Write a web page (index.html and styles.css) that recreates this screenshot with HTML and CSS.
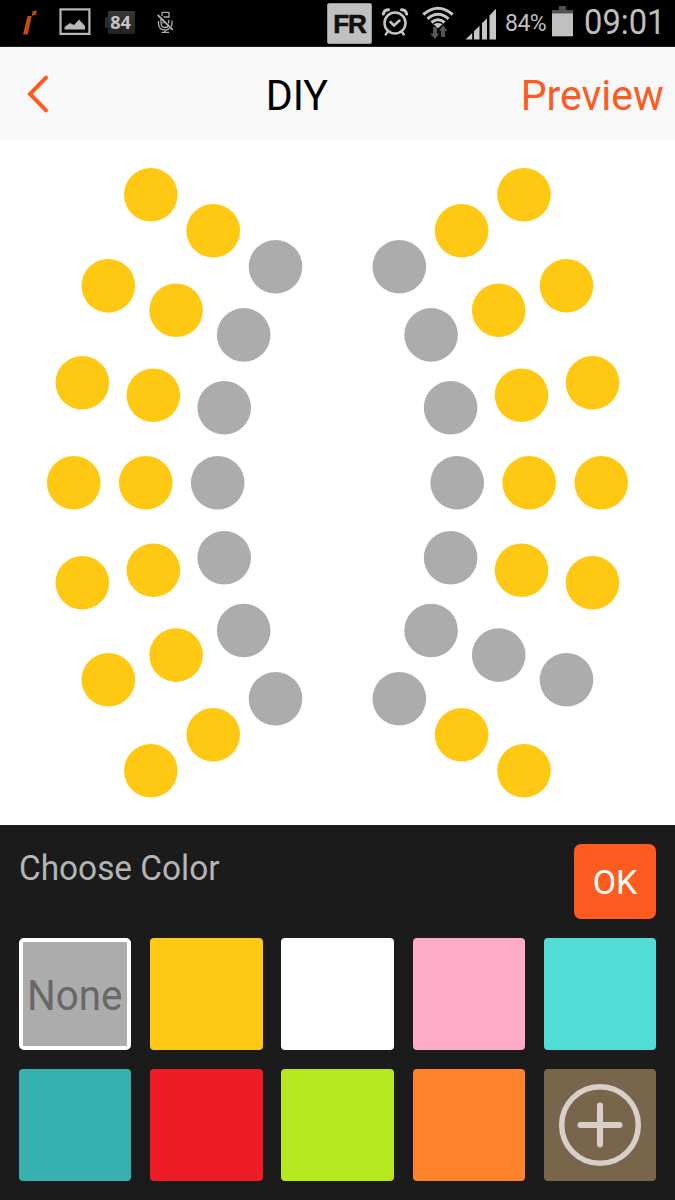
FILE: index.html
```html
<!DOCTYPE html>
<html lang="en">
<head>
<meta charset="utf-8">
<title>DIY</title>
<link rel="stylesheet" href="styles.css">
</head>
<body>
<div class="status">
  <div class="status-left">
    <svg class="app-icon" width="15" height="26" viewBox="22 9 15 26"><path d="M27.500 16h4.200l-4 18.500H23z M32.500 11.500l4.500-1.300-1 4.300-4.200 1.500z" fill="#c64a18"/></svg>
    <svg class="photo-icon" width="32" height="27" viewBox="59 8.500 32 27"><rect x="60.500" y="9.900" width="28.900" height="24.500" fill="none" stroke="#b8b8b8" stroke-width="2.200"/><path d="M64.500 30v-2.500l5.500-4 4 2 5-5.500 6 6.500V30z" fill="#b8b8b8"/></svg>
    <div class="level"><span>84</span></div>
    <svg class="mic-icon" width="18" height="23" viewBox="156 11 18 23" fill="none" stroke="#b0b0b0" stroke-width="1.300"><path d="M162 16v-3q0-.6.7-.6h5.600q.7 0 .7.700V17h-5.500M161 19v4q0 4.500 4 4.500 2.200 0 3.400-1.300M158.500 21v2.500q0 6 6.500 6.700 2.800-.2 4.500-1.600M172 20.500v3q0 1.700-.8 3M161.500 32.300h7.500M165 30v2M168.700 20v3.500M163 22v1.500"/><path d="M157.700 15l15 14.800" stroke-width="1.800"/></svg>
  </div>
  <div class="status-right">
    <div class="language">FR</div>
    <svg class="alarm-icon" width="28" height="30" viewBox="381 7 28 30" fill="none" stroke="#c6c6c6" stroke-width="2.500" stroke-linecap="round"><circle cx="395" cy="23" r="10.500"/><path d="M390.500 22l3.500 3.500 5.500-5M387.500 32l-1.700 2.400M402 32l1.700 2.400"/><path d="M383.300 14q1-4.200 5.200-4.200M401.500 9.800q4.200 0 5.200 4.200" stroke-width="3"/></svg>
    <svg class="wifi-icon" width="33" height="34" viewBox="422 5 33 34"><g fill="none" stroke="#c6c6c6" stroke-width="3"><path d="M423.300 14.500q14.700-12.500 29.400 0M427.500 18.800q10.500-9 21 0M431.500 22.500q6.500-5.500 13 0"/></g><path d="M433.500 24.200q4.500-2.500 9 0l-4.500 4z" fill="#c6c6c6"/><path d="M433 27h4v6.500h2.500l-4.500 5.500-5-5.500h3z M443 25l4.500 6H445v6h-4v-6h-2z" fill="#555"/></svg>
    <svg class="signal-icon" width="32" height="32" viewBox="465 8 32 32" fill="#c6c6c6"><path d="M465.500 39.500l6.700-6.500v6.500z M474 31.200l5.500-5.500v13.800H474z M482 23.200l5-5v21.300h-5z M489.500 15.500l6.500-6.700v30.700h-6.500z"/></svg>
    <span class="percent">84%</span>
    <svg class="battery-icon" width="21" height="31" viewBox="552 6.500 21 31"><path d="M552 14v-3.500h7v-4h7v4h7V14z" fill="#505050"/><path d="M552 13.800h21v23h-21z" fill="#c0c0c0"/></svg>
    <time class="clock">09:01</time>
  </div>
</div>
<header class="header">
  <svg class="back" width="23" height="40" viewBox="0 0 23 40"><path d="M19 3.700L3 20l16 16.300" fill="none" stroke="#fd5b20" stroke-width="4" stroke-linecap="round"/></svg>
  <h1 class="title">DIY</h1>
  <a class="preview">Preview</a>
</header>
<main class="board">
  <svg width="675" height="685" viewBox="0 140 675 685">
    <g fill="#ffc812">
      <circle cx="150.800" cy="194.700" r="26.800"/><circle cx="213.200" cy="230.700" r="26.800"/>
      <circle cx="108.300" cy="285.700" r="26.800"/><circle cx="176.100" cy="310.300" r="26.800"/>
      <circle cx="82.300" cy="382.700" r="26.800"/><circle cx="153.300" cy="395.200" r="26.800"/>
      <circle cx="73.700" cy="482.700" r="26.800"/><circle cx="145.700" cy="482.700" r="26.800"/>
      <circle cx="82.300" cy="582.700" r="26.800"/><circle cx="153.300" cy="570.200" r="26.800"/>
      <circle cx="108.300" cy="679.700" r="26.800"/><circle cx="176.100" cy="655.100" r="26.800"/>
      <circle cx="150.800" cy="770.700" r="26.800"/><circle cx="213.200" cy="734.700" r="26.800"/>
      <circle cx="524" cy="194.700" r="26.800"/><circle cx="461.600" cy="230.700" r="26.800"/>
      <circle cx="566.500" cy="285.700" r="26.800"/><circle cx="498.700" cy="310.300" r="26.800"/>
      <circle cx="592.500" cy="382.700" r="26.800"/><circle cx="521.500" cy="395.200" r="26.800"/>
      <circle cx="601.200" cy="482.700" r="26.800"/><circle cx="529.200" cy="482.700" r="26.800"/>
      <circle cx="592.500" cy="582.700" r="26.800"/><circle cx="521.500" cy="570.200" r="26.800"/>
      <circle cx="524" cy="770.700" r="26.800"/><circle cx="461.600" cy="734.700" r="26.800"/>
    </g>
    <g fill="#acacac">
      <circle cx="275.500" cy="266.700" r="26.800"/><circle cx="243.700" cy="334.900" r="26.800"/><circle cx="224.200" cy="407.700" r="26.800"/><circle cx="217.700" cy="482.700" r="26.800"/><circle cx="224.200" cy="557.700" r="26.800"/><circle cx="243.700" cy="630.500" r="26.800"/><circle cx="275.500" cy="698.700" r="26.800"/>
      <circle cx="399.300" cy="266.700" r="26.800"/><circle cx="431.100" cy="334.900" r="26.800"/><circle cx="450.600" cy="407.700" r="26.800"/><circle cx="457.200" cy="482.700" r="26.800"/><circle cx="450.600" cy="557.700" r="26.800"/><circle cx="431.100" cy="630.500" r="26.800"/><circle cx="399.300" cy="698.700" r="26.800"/>
      <circle cx="498.700" cy="655.100" r="26.800"/><circle cx="566.500" cy="679.700" r="26.800"/>
    </g>
  </svg>
</main>
<section class="panel">
  <div class="panel-head">
    <h2 class="choose">Choose Color</h2>
    <button class="ok">OK</button>
  </div>
  <div class="swatches">
    <div class="swatch none"><span>None</span></div>
    <div class="swatch yellow"></div>
    <div class="swatch white"></div>
    <div class="swatch pink"></div>
    <div class="swatch aqua"></div>
    <div class="swatch teal"></div>
    <div class="swatch red"></div>
    <div class="swatch lime"></div>
    <div class="swatch orange"></div>
    <div class="swatch add"><svg width="84" height="84" viewBox="0 0 84 84" fill="none" stroke="#d8d0c8"><circle cx="42" cy="42" r="38.300" stroke-width="5.500"/><path d="M42 22.500v39M22.500 42h39" stroke-width="6" stroke-linecap="round"/></svg></div>
  </div>
</section>
</body>
</html>
```
FILE: styles.css
```css
* { box-sizing: border-box; }
body { margin: 0; width: 675px; height: 1200px; overflow: hidden; background: #fff; font-family: Roboto, sans-serif; }
svg { display: block; flex: none; }

.status { display: flex; justify-content: space-between; height: 47px; background: #000; border-bottom: 1px solid #222; color: #bfbfbf; }
.status-left, .status-right { display: flex; align-items: flex-start; }
.app-icon { margin: 9px 0 0 22px; }
.photo-icon { margin: 8px 0 0 22px; }
.level { margin: 11px 0 0 17px; width: 27px; height: 23px; background: linear-gradient(#383838, #222); border-radius: 1px; font: bold 18px/23px "Open Sans", sans-serif; text-align: center; color: #c4c4c4; }
.level::before { content: ""; float: left; width: 3px; height: 11px; margin: 6px 0 0 -3px; background: #2a2a2a; }
.level span { display: block; margin-left: -2px; }
.mic-icon { margin: 11px 0 0 21px; }
.language { margin: 3px 9px 0 0; width: 45px; height: 41px; border: 1px solid #999; border-radius: 2px; background: #c0c0c0; color: #111; font: bold 26px/41px "Liberation Sans", sans-serif; letter-spacing: -1px; -webkit-text-stroke: 0.6px #111; text-align: center; }
.alarm-icon { margin: 7px 13px 0 0; }
.wifi-icon { margin: 5px 10px 0 0; }
.signal-icon { margin: 8px 8px 0 0; }
.percent { width: 47px; font-size: 23px; line-height: 27px; margin-top: 10px; letter-spacing: -0.5px; }
.battery-icon { margin-top: 6px; }
.clock { width: 91px; margin: 2px 0 0 11px; font-size: 35px; line-height: 41px; white-space: nowrap; transform: scaleX(0.935); transform-origin: left; }

.header { display: grid; grid-template-columns: 77px 1fr auto; align-items: center; height: 93px; padding-right: 11px; background: #f8f8f8; }
.back { margin-left: 27px; }
.title { justify-self: center; margin: 0; font-size: 42px; font-weight: 400; line-height: 50px; color: #000; padding-top: 4px; transform: scaleX(0.98); }
.preview { font-size: 42px; line-height: 50px; color: #fd5b20; padding-top: 4px; transform: scaleX(0.975); transform-origin: right; }

.board { height: 685px; }

.panel { height: 375px; padding: 18.75px; background: #1b1b1b; }
.panel-head { display: flex; justify-content: space-between; align-items: flex-start; height: 93.75px; }
.choose { margin: 4px 0 0; font-size: 35px; font-weight: 400; line-height: 41px; color: #b5b5b5; transform: scaleX(0.953); transform-origin: left; }
.ok { width: 82.5px; height: 75px; padding: 2px 0 0; border: 0; border-radius: 7px; background: #fd5b20; color: #fff; font: 34px/40px Roboto, sans-serif; }
.swatches { display: grid; grid-template-columns: repeat(5, 112.5px); grid-auto-rows: 112.5px; gap: 18.75px; }
.swatch { display: flex; align-items: center; justify-content: center; border-radius: 4px; }
.none { background: #acacac; border: 4px solid #fff; border-radius: 5px; color: #686868; font-size: 42px; line-height: 50px; padding-top: 5px; }
.none span { transform: scaleX(0.96); }
.yellow { background: #ffc812; }
.white { background: #fff; }
.pink { background: #ffabc8; }
.aqua { background: #51dcd5; }
.teal { background: #37b1b0; }
.red { background: #ee1d25; }
.lime { background: #b5e81e; }
.orange { background: #ff812b; }
.add { background: #79654c; }
```
